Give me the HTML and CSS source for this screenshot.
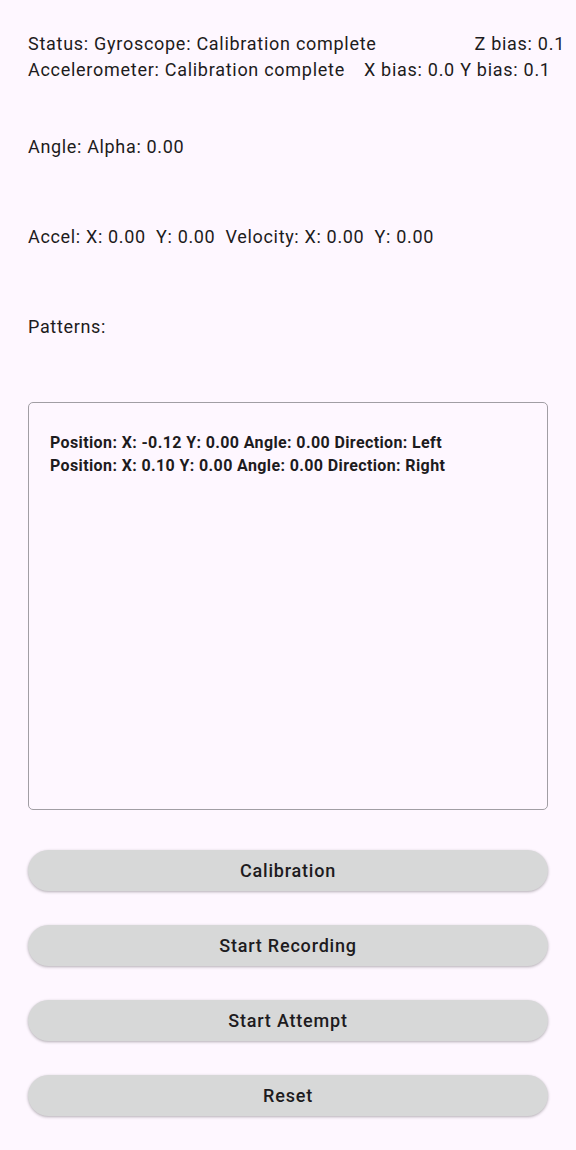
FILE: index.html
```html
<!DOCTYPE html>
<html>
<head>
<meta charset="utf-8">
<link rel="stylesheet" href="styles.css">
</head>
<body>
<div class="screen">
  <div class="status">
    <div class="row row1"><span>Status: Gyroscope: Calibration complete</span><span class="zbias">Z bias: 0.1</span></div>
    <div class="row row2"><span>Accelerometer: Calibration complete</span><span class="xybias">X bias: 0.0 Y bias: 0.1</span></div>
  </div>
  <div class="line angle">Angle: Alpha: 0.00</div>
  <div class="line accel">Accel: X: 0.00&nbsp; Y: 0.00&nbsp; Velocity: X: 0.00&nbsp; Y: 0.00</div>
  <div class="line patterns">Patterns:</div>
  <div class="box">
    <div class="entry">Position: X: -0.12 Y: 0.00 Angle: 0.00 Direction: Left</div>
    <div class="entry">Position: X: 0.10 Y: 0.00 Angle: 0.00 Direction: Right</div>
  </div>
  <div class="buttons">
    <button class="btn">Calibration</button>
    <button class="btn">Start Recording</button>
    <button class="btn">Start Attempt</button>
    <button class="btn">Reset</button>
  </div>
</div>
</body>
</html>
```
FILE: styles.css
```css
html, body {
  margin: 0;
  padding: 0;
  background: #fef7ff;
}
body {
  font-family: Roboto, "Noto Sans", sans-serif;
  color: #1d1b20;
  width: 576px;
  height: 1150px;
  overflow: hidden;
}
.screen {
  padding: 31px 0 0 28px;
}
.status {
  font-size: 18px;
  line-height: 26px;
  letter-spacing: 0.72px;
}
.row {
  display: flex;
  white-space: nowrap;
}
.row1 {
  justify-content: space-between;
  padding-right: 11px;
}
.row2 {
  gap: 19px;
}
.line {
  font-size: 18px;
  line-height: 26px;
  letter-spacing: 0.66px;
}
.angle { margin-top: 51px; }
.accel { margin-top: 64px; }
.patterns { margin-top: 64px; }
.box {
  margin-top: 62px;
  width: 518px;
  height: 406px;
  border: 1px solid #a19ea4;
  border-radius: 5px;
  padding: 0;
}
.entry {
  font-size: 16px;
  font-weight: 700;
  line-height: 23px;
  letter-spacing: 0.38px;
  padding-left: 21px;
  white-space: nowrap;
}
.entry:first-child {
  margin-top: 28px;
}
.buttons {
  margin-top: 40px;
  display: flex;
  flex-direction: column;
  gap: 34px;
  width: 520px;
}
.btn {
  height: 41px;
  border: none;
  border-radius: 21px;
  background: #d7d8d8;
  box-shadow: 0 1px 3px rgba(0,0,0,0.3);
  font-family: Roboto, "Noto Sans", sans-serif;
  font-size: 18px;
  font-weight: 500;
  letter-spacing: 0.8px;
  color: #1d1b20;
  padding: 0;
}
```
